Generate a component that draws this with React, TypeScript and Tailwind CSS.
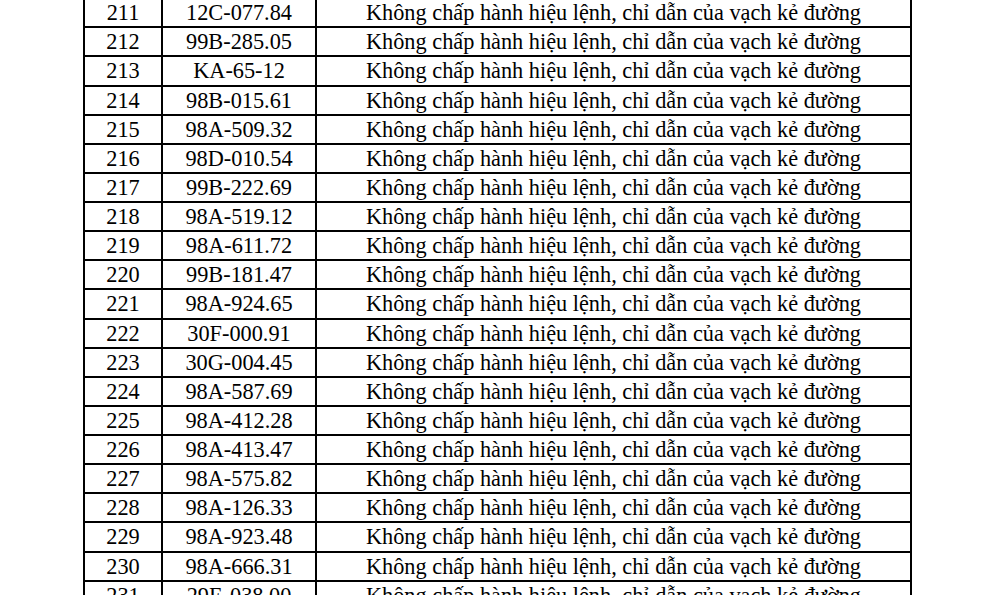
const ROWS: Array<[number, string]> = [
  [211, "12C-077.84"],
  [212, "99B-285.05"],
  [213, "KA-65-12"],
  [214, "98B-015.61"],
  [215, "98A-509.32"],
  [216, "98D-010.54"],
  [217, "99B-222.69"],
  [218, "98A-519.12"],
  [219, "98A-611.72"],
  [220, "99B-181.47"],
  [221, "98A-924.65"],
  [222, "30F-000.91"],
  [223, "30G-004.45"],
  [224, "98A-587.69"],
  [225, "98A-412.28"],
  [226, "98A-413.47"],
  [227, "98A-575.82"],
  [228, "98A-126.33"],
  [229, "98A-923.48"],
  [230, "98A-666.31"],
  [231, "29E-038.00"],
];

const VIOLATION = "Không chấp hành hiệu lệnh, chỉ dẫn của vạch kẻ đường";

export default function App() {
  return (
    <div className="w-[992px] h-[595px] overflow-hidden bg-white">
      <div
        className="ml-[83px] mt-[-2.83px] w-[829px] border-x-2 border-black text-[22.3px] text-black leading-[26px]"
        style={{ fontFamily: '"Liberation Serif", "Times New Roman", serif' }}
      >
        {ROWS.map(([no, plate]) => (
          <div key={no} className="flex h-[29.13px] border-t-2 border-black">
            <div className="w-[78px] shrink-0 border-r-2 border-black pt-px text-center">{no}</div>
            <div className="w-[154px] shrink-0 border-r-2 border-black pt-px text-center">{plate}</div>
            <div className="flex-1 pt-px text-center whitespace-nowrap">{VIOLATION}</div>
          </div>
        ))}
      </div>
    </div>
  );
}
